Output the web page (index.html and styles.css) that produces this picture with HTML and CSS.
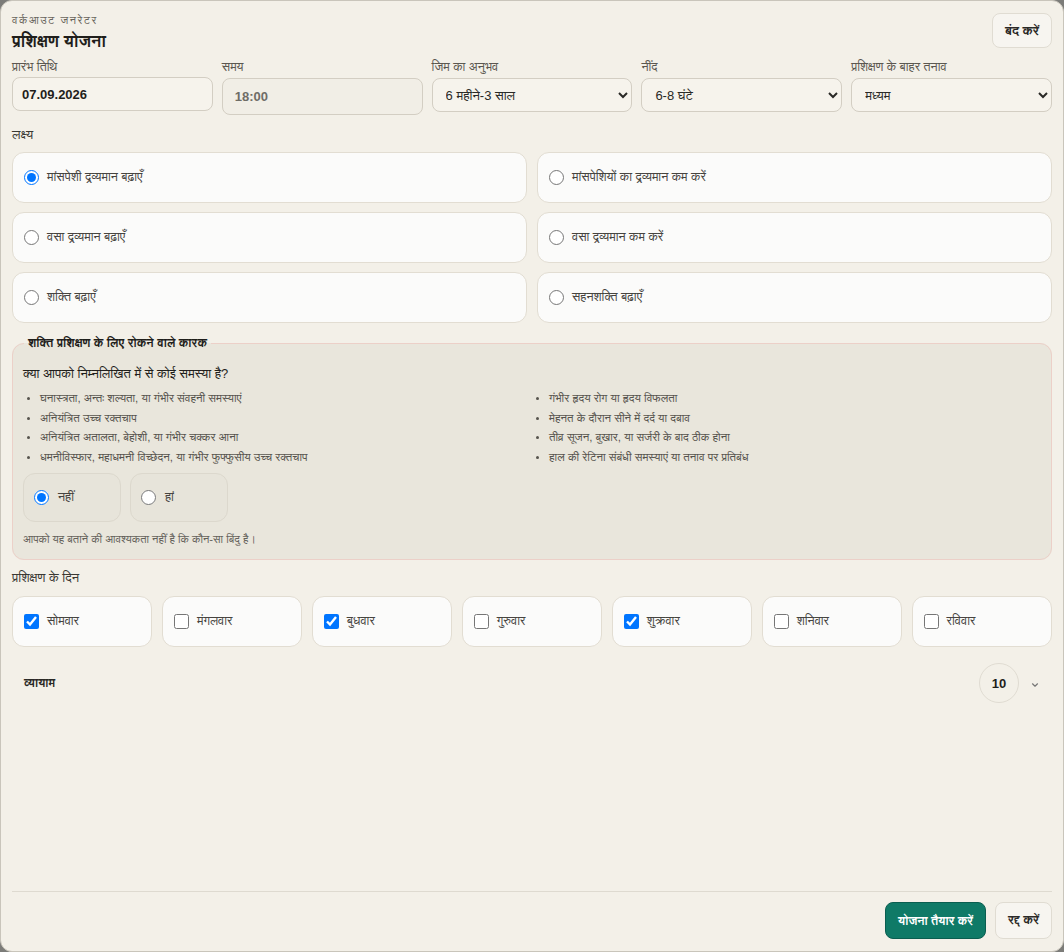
FILE: index.html
```html
<!DOCTYPE html>
<html lang="hi">
<head>
<meta charset="utf-8">
<title>प्रशिक्षण योजना</title>
<link rel="stylesheet" href="styles.css">
</head>
<body>
<div class="dialog">
  <header class="head">
    <div class="head-text">
      <div class="eyebrow">वर्कआउट जनरेटर</div>
      <h1 class="title">प्रशिक्षण योजना</h1>
    </div>
    <button class="btn btn-light btn-close">बंद करें</button>
  </header>

  <div class="fields">
    <label class="field">
      <span class="field-label">प्रारंभ तिथि</span>
      <input class="control control-date" type="text" value="07.09.2026">
    </label>
    <label class="field">
      <span class="field-label">समय</span>
      <input class="control control-time" type="text" value="18:00">
    </label>
    <label class="field">
      <span class="field-label">जिम का अनुभव</span>
      <select class="control control-select"><option>6 महीने-3 साल</option></select>
    </label>
    <label class="field">
      <span class="field-label">नींद</span>
      <select class="control control-select"><option>6-8 घंटे</option></select>
    </label>
    <label class="field">
      <span class="field-label">प्रशिक्षण के बाहर तनाव</span>
      <select class="control control-select"><option>मध्यम</option></select>
    </label>
  </div>

  <div class="section-label goals-label">लक्ष्य</div>
  <div class="goals">
    <label class="option-card"><input type="radio" name="goal" checked><span>मांसपेशी द्रव्यमान बढ़ाएँ</span></label>
    <label class="option-card"><input type="radio" name="goal"><span>मांसपेशियों का द्रव्यमान कम करें</span></label>
    <label class="option-card"><input type="radio" name="goal"><span>वसा द्रव्यमान बढ़ाएँ</span></label>
    <label class="option-card"><input type="radio" name="goal"><span>वसा द्रव्यमान कम करें</span></label>
    <label class="option-card"><input type="radio" name="goal"><span>शक्ति बढ़ाएँ</span></label>
    <label class="option-card"><input type="radio" name="goal"><span>सहनशक्ति बढ़ाएँ</span></label>
  </div>

  <fieldset class="barriers">
    <legend class="barriers-legend">शक्ति प्रशिक्षण के लिए रोकने वाले कारक</legend>
    <p class="question">क्या आपको निम्नलिखित में से कोई समस्या है?</p>
    <div class="conditions">
      <ul class="condition-list">
        <li>घनास्त्रता, अन्तः शल्यता, या गंभीर संवहनी समस्याएं</li>
        <li>अनियंत्रित उच्च रक्तचाप</li>
        <li>अनियंत्रित अतालता, बेहोशी, या गंभीर चक्कर आना</li>
        <li>धमनीविस्फार, महाधमनी विच्छेदन, या गंभीर फुफ्फुसीय उच्च रक्तचाप</li>
      </ul>
      <ul class="condition-list">
        <li>गंभीर हृदय रोग या हृदय विफलता</li>
        <li>मेहनत के दौरान सीने में दर्द या दबाव</li>
        <li>तीव्र सूजन, बुखार, या सर्जरी के बाद ठीक होना</li>
        <li>हाल की रेटिना संबंधी समस्याएं या तनाव पर प्रतिबंध</li>
      </ul>
    </div>
    <div class="yesno">
      <label class="choice"><input type="radio" name="barrier" checked><span>नहीं</span></label>
      <label class="choice"><input type="radio" name="barrier"><span>हां</span></label>
    </div>
    <p class="note">आपको यह बताने की आवश्यकता नहीं है कि कौन-सा बिंदु है।</p>
  </fieldset>

  <div class="section-label days-label">प्रशिक्षण के दिन</div>
  <div class="days">
    <label class="option-card day"><input type="checkbox" checked><span>सोमवार</span></label>
    <label class="option-card day"><input type="checkbox"><span>मंगलवार</span></label>
    <label class="option-card day"><input type="checkbox" checked><span>बुधवार</span></label>
    <label class="option-card day"><input type="checkbox"><span>गुरुवार</span></label>
    <label class="option-card day"><input type="checkbox" checked><span>शुक्रवार</span></label>
    <label class="option-card day"><input type="checkbox"><span>शनिवार</span></label>
    <label class="option-card day"><input type="checkbox"><span>रविवार</span></label>
  </div>

  <div class="exercise-row">
    <span class="exercise-label">व्यायाम</span>
    <div class="exercise-count">
      <span class="count-circle">10</span>
      <svg class="chevron" width="8" height="6" viewBox="0 0 8 6" aria-hidden="true"><path d="M1.5 1.8 L4 4.2 L6.5 1.8" fill="none" stroke="#777" stroke-width="1.2" stroke-linecap="round" stroke-linejoin="round"/></svg>
    </div>
  </div>

  <footer class="foot">
    <button class="btn btn-primary">योजना तैयार करें</button>
    <button class="btn btn-light btn-cancel">रद्द करें</button>
  </footer>
</div>
</body>
</html>
```

FILE: styles.css
```css
* { box-sizing: border-box; }

html, body {
  margin: 0;
  height: 100%;
}

body {
  background: #7c7c79;
  font-family: "Liberation Sans", "FreeSans", Arial, sans-serif;
  color: #2b2a27;
}

.dialog {
  width: 1064px;
  height: 952px;
  background: #f3f0e8;
  border: 1px solid #c9c5bb;
  border-radius: 12px;
  padding: 11px 11px 12px;
  display: flex;
  flex-direction: column;
}

/* header */
.head {
  display: flex;
  justify-content: space-between;
  align-items: flex-start;
}

.eyebrow {
  font-size: 11px;
  line-height: 14px;
  letter-spacing: 1.5px;
  color: #6a665e;
  margin-top: 1px;
}

.title {
  margin: 3px 0 0;
  font-size: 17px;
  line-height: 24px;
  font-weight: 700;
  color: #1f1e1b;
}

.btn {
  font-family: inherit;
  font-size: 13px;
  font-weight: 700;
  border-radius: 8px;
  cursor: pointer;
}

.btn-light {
  background: #f7f5f0;
  border: 1px solid #e0dcd2;
  color: #2a2926;
  height: 37px;
  padding: 0 12px;
}

.btn-close {
  height: 35px;
  margin-top: 1px;
}

.btn-cancel {
  font-size: 12.5px;
}

.btn-primary {
  background: #0f7a67;
  border: 1px solid #0a5e50;
  color: #ffffff;
  height: 37px;
  padding: 0 12px;
  font-size: 12px;
}

/* top fields */
.fields {
  display: grid;
  grid-template-columns: repeat(5, 1fr);
  column-gap: 9px;
  margin-top: 5px;
}

.field {
  display: flex;
  flex-direction: column;
}

.field-label {
  font-size: 12.5px;
  line-height: 16px;
  color: #5b5750;
  margin-bottom: 2px;
}

.control {
  font-family: inherit;
  height: 34px;
  border: 1px solid #d3cec3;
  border-radius: 8px;
  background: #f6f3ec;
  color: #2a2926;
  font-size: 13px;
  padding: 0 9px;
  width: 100%;
}

.control-date {
  font-weight: 700;
  font-size: 13px;
  color: #1f1e1b;
}

.control-time {
  height: 37px;
  margin-top: 1px;
  padding: 0 12px;
  font-weight: 700;
  font-size: 13px;
  color: #6f6c66;
  background: #f1eee6;
}

.control-select {
  padding: 0 8px 0 9px;
  margin-top: 1px;
}

/* section labels */
.section-label {
  font-size: 13px;
  line-height: 16px;
  color: #3a3833;
}

.goals-label {
  margin-top: 12px;
  margin-bottom: 9px;
}

/* goals */
.goals {
  display: grid;
  grid-template-columns: 1fr 1fr;
  column-gap: 10px;
  row-gap: 9px;
}

.option-card {
  display: flex;
  align-items: center;
  gap: 8px;
  height: 51px;
  padding: 0 11px;
  background: #fbfbfa;
  border: 1px solid #e2ddd2;
  border-radius: 12px;
  font-size: 12.5px;
  color: #46443f;
}

.option-card input,
.choice input {
  width: 15px;
  height: 15px;
  margin: 0;
  flex: none;
}

/* barriers fieldset */
.barriers {
  margin: 13px 0 0;
  padding: 15px 10px 12px;
  border: 1px solid #ecd0c8;
  border-radius: 12px;
  background: #e9e6dc;
  min-width: 0;
}

.barriers-legend {
  font-size: 12.2px;
  font-weight: 700;
  color: #1f1e1b;
  padding: 0 4px;
  margin-left: 1px;
}

.question {
  margin: 0 0 6px;
  font-size: 13px;
  line-height: 18px;
  color: #1f1e1b;
}

.conditions {
  display: grid;
  grid-template-columns: 1fr 1fr;
}

.condition-list {
  margin: 0;
  padding-left: 17px;
  font-size: 11.5px;
  line-height: 19.5px;
  color: #57544e;
}

.condition-list li::marker {
  font-size: 10px;
}

.yesno {
  display: flex;
  gap: 9px;
  margin-top: 6px;
}

.choice {
  display: flex;
  align-items: center;
  gap: 9px;
  width: 98px;
  height: 49px;
  padding: 0 10px;
  background: #e7e4da;
  border: 1px solid #dcd8cd;
  border-radius: 12px;
  font-size: 12.5px;
  color: #46443f;
}

.note {
  margin: 9px 0 0;
  font-size: 11.2px;
  line-height: 16px;
  color: #65625b;
}

/* days */
.days-label {
  margin-top: 10px;
  margin-bottom: 10px;
}

.days {
  display: grid;
  grid-template-columns: repeat(7, 1fr);
  column-gap: 9.5px;
}

.day {
  height: 51px;
}

/* exercise row */
.exercise-row {
  display: flex;
  justify-content: space-between;
  align-items: center;
  margin-top: 16px;
  padding: 0 13px 0 12px;
}

.exercise-label {
  font-size: 12px;
  font-weight: 700;
  color: #2a2926;
}

.exercise-count {
  display: flex;
  align-items: center;
  gap: 12px;
}

.count-circle {
  width: 40px;
  height: 40px;
  border-radius: 50%;
  border: 1px solid #e0dcd2;
  display: flex;
  align-items: center;
  justify-content: center;
  font-size: 13px;
  font-weight: 700;
  color: #1f1e1b;
}

.chevron {
  display: block;
  margin-top: 4px;
}

/* footer */
.foot {
  margin-top: auto;
  border-top: 1px solid #dedad0;
  padding-top: 10px;
  display: flex;
  justify-content: flex-end;
  gap: 9px;
}
```
